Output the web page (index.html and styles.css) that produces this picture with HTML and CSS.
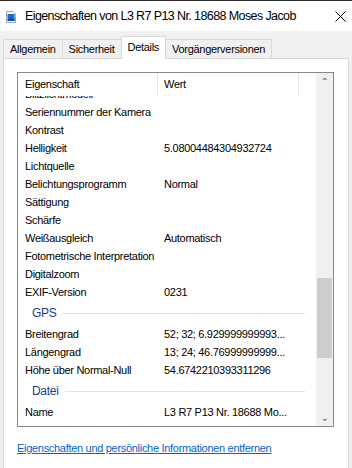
FILE: index.html
```html
<!DOCTYPE HTML>
<html>
    <head>
        <meta charset="UTF-8">
        <title>Eigenschaften</title>
        <link rel="stylesheet" href="styles.css">
    </head>
    <body>
        <div id="win">
            <div class="titlebar">
                <svg class="ico" width="10" height="12" viewBox="0 0 10 12">
                    <path d="M0.5 0.5h6.5l2.5 2.5v8.5h-9z" fill="#fff" stroke="#9aa4b0"/>
                    <rect x="1.5" y="3" width="7" height="7" fill="#1b6fc2"/>
                    <path d="M1.5 10l3-3.5 2 2 2-1.5v3z" fill="#0d4f96"/>
                </svg>
                <span class="title">Eigenschaften von L3 R7 P13 Nr. 18688 Moses Jacob</span>
                <svg class="close" width="11" height="11" viewBox="0 0 11 11">
                    <path d="M0.5 0.5l10 10M10.5 0.5l-10 10" stroke="#000" stroke-width="1"/>
                </svg>
            </div>
            <div class="content">
                <ul class="tabs">
                    <li>Allgemein</li>
                    <li>Sicherheit</li>
                    <li class="active">Details</li>
                    <li>Vorgängerversionen</li>
                </ul>
                <div class="panel">
                    <div class="list">
                        <div class="main">
                            <div class="head">
                                <div class="c1">Eigenschaft</div>
                                <div class="c2">Wert</div>
                                <div class="c3"></div>
                            </div>
                            <div class="rows">
                                <div class="row first"><span class="c1">Blitzlichtmodell</span><span class="c2"></span></div>
                                <div class="row"><span class="c1">Seriennummer der Kamera</span><span class="c2"></span></div>
                                <div class="row"><span class="c1">Kontrast</span><span class="c2"></span></div>
                                <div class="row"><span class="c1">Helligkeit</span><span class="c2">5.08004484304932724</span></div>
                                <div class="row"><span class="c1">Lichtquelle</span><span class="c2"></span></div>
                                <div class="row"><span class="c1">Belichtungsprogramm</span><span class="c2">Normal</span></div>
                                <div class="row"><span class="c1">Sättigung</span><span class="c2"></span></div>
                                <div class="row"><span class="c1">Schärfe</span><span class="c2"></span></div>
                                <div class="row"><span class="c1">Weißausgleich</span><span class="c2">Automatisch</span></div>
                                <div class="row"><span class="c1">Fotometrische Interpretation</span><span class="c2"></span></div>
                                <div class="row"><span class="c1">Digitalzoom</span><span class="c2"></span></div>
                                <div class="row"><span class="c1">EXIF-Version</span><span class="c2">0231</span></div>
                                <div class="group"><span>GPS</span></div>
                                <div class="row"><span class="c1">Breitengrad</span><span class="c2">52; 32; 6.929999999993...</span></div>
                                <div class="row"><span class="c1">Längengrad</span><span class="c2">13; 24; 46.76999999999...</span></div>
                                <div class="row"><span class="c1">Höhe über Normal-Null</span><span class="c2">54.6742210393311296</span></div>
                                <div class="group"><span>Datei</span></div>
                                <div class="row"><span class="c1">Name</span><span class="c2">L3 R7 P13 Nr. 18688 Mo...</span></div>
                                <div class="row"><span class="c1">Elementtyp</span><span class="c2">JPG-Datei</span></div>
                            </div>
                        </div>
                        <div class="scroll">
                            <div class="arrow">&#x2303;</div>
                            <div class="track"><div class="thumb"></div></div>
                            <div class="arrow down">&#x2304;</div>
                        </div>
                    </div>
                    <a class="link" href="#">Eigenschaften und persönliche Informationen entfernen</a>
                </div>
            </div>
        </div>
    </body>
</html>
```

FILE: styles.css
```css
body{margin:0;font-family:"Liberation Sans",Arial,sans-serif;color:#000;}
ul,li{margin:0;padding:0;list-style:none;}
#win{
    width:352px;
    height:468px;
    overflow:hidden;
    background:#f0f0f0;
}
.titlebar{
    height:30px;
    border-top:1px solid #2b2b2b;
    background:#fff;
    display:flex;
    align-items:center;
}
.titlebar .ico{margin:1px 0 0 6px;}
.titlebar .title{
    margin-left:9px;
    font-size:12.5px;
    letter-spacing:-0.6px;
    white-space:nowrap;
    flex:1;
}
.titlebar .close{margin-right:6px;}
.content{padding:5px 3px 0 3px;}
.tabs{
    display:flex;
    height:22px;
    align-items:flex-end;
    font-size:11px;
    letter-spacing:-0.3px;
}
.tabs li{
    height:19px;
    line-height:18px;
    padding:0 6px;
    border:1px solid #d9d9d9;
    border-bottom:none;
    border-right:none;
    box-sizing:border-box;
    background:#f0f0f0;
}
.tabs li:nth-child(4){border-right:1px solid #d9d9d9;}
.tabs li.active{
    height:23px;
    line-height:20px;
    background:#fff;
    margin-bottom:-1px;
    position:relative;
    border-right:1px solid #d9d9d9;
}
.tabs li.active + li{border-left:none;}
.panel{
    background:#fff;
    border:1px solid #d9d9d9;
    height:420px;
    padding:13px 0 0 13px;
    box-sizing:border-box;
}
.list{
    width:317px;
    height:355px;
    border:1px solid #828790;
    box-sizing:border-box;
    display:flex;
    font-size:11px;
    letter-spacing:-0.3px;
}
.main{flex:1;overflow:hidden;}
.head{
    display:flex;
    height:23px;
    line-height:22px;
}
.head div{border-right:1px solid #e5e5e5;box-sizing:border-box;height:23px;}
.head .c1{width:140px;padding-left:7px;}
.head .c2{width:141px;padding-left:6px;}
.head .c3{border-right:none;flex:1;}
.rows{height:330px;overflow:hidden;}
.row{
    display:flex;
    height:18px;
    line-height:18px;
    white-space:nowrap;
}
.row.first{margin-top:-11px;}
.row .c1{width:140px;padding-left:7px;box-sizing:border-box;overflow:hidden;}
.row .c2{padding-left:6px;}
.group{
    height:24px;
    display:flex;
    align-items:center;
    padding:0 0 0 14px;
    color:#1e3a8a;
    font-size:12px;
    margin-right:11px;
}
.group::after{
    content:"";
    flex:1;
    height:1px;
    background:#dce1ea;
    margin-left:6px;
}
.scroll{
    width:17px;
    background:#f0f0f0;
    display:flex;
    flex-direction:column;
}
.arrow{
    height:17px;
    line-height:17px;
    text-align:center;
    color:#606060;
    font-size:10px;
    font-family:"DejaVu Sans",sans-serif;
}
.track{flex:1;padding-top:188px;}
.thumb{
    height:80px;
    margin:0 1px;
    background:#cdcdcd;
}
.link{
    display:block;
    margin-top:15px;
    font-size:11px;
    letter-spacing:-0.3px;
    color:#0066cc;
}
```
